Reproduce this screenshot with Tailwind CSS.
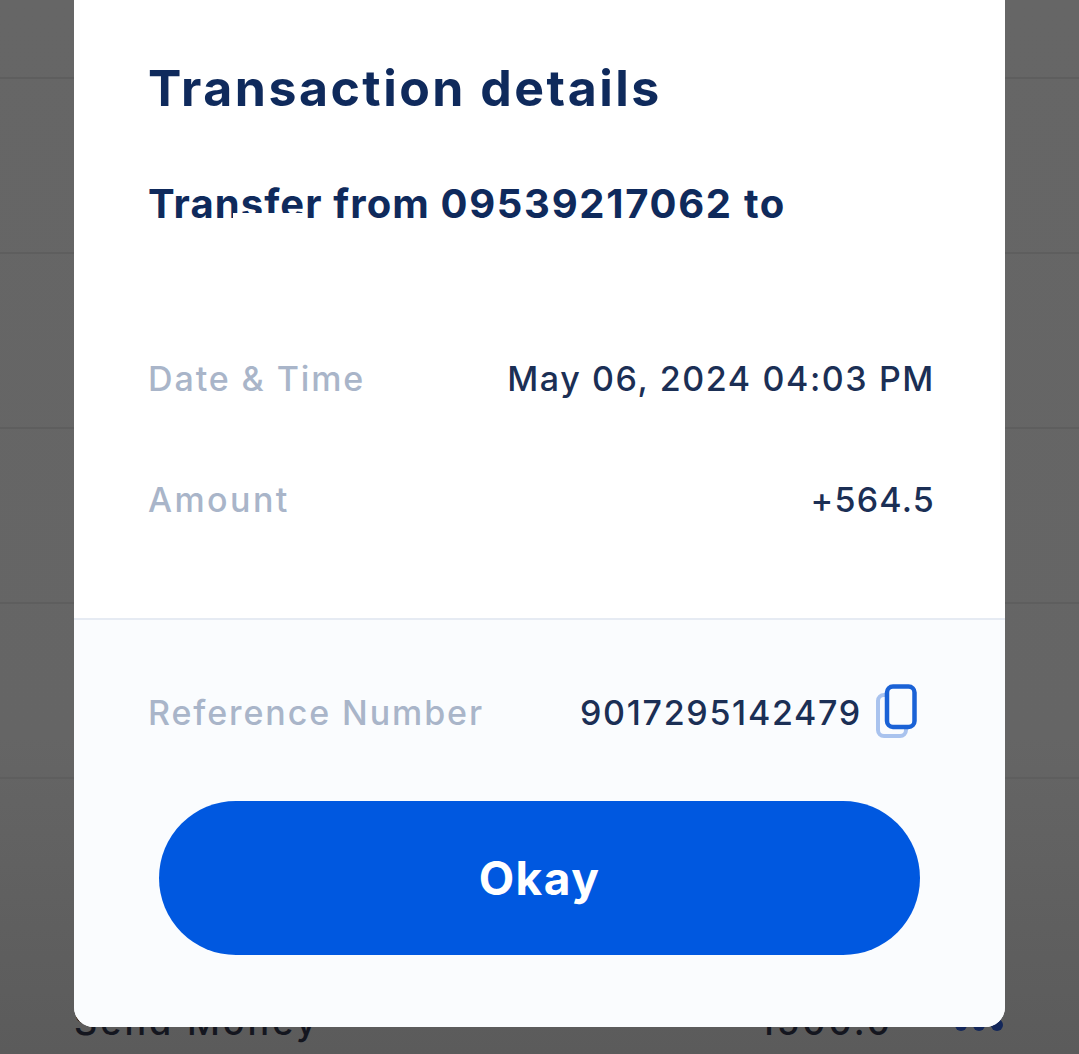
<!DOCTYPE html>
<html lang="en">
<head>
    <meta charset="UTF-8">
    <meta name="viewport" content="width=device-width, initial-scale=1.0">
    <title>Transaction details</title>
    <script src="https://cdn.jsdelivr.net/npm/@tailwindcss/browser@4"></script>
</head>
<body class="bg-[#636363]">
    <div class="relative w-[1079px] h-[1054px] overflow-hidden font-['Inter',sans-serif] bg-[linear-gradient(180deg,#666666_0%,#656565_70%,#5b5b5b_100%)]">
        <!-- list behind the dialog -->
        <div class="flex flex-col">
            <div class="h-[79px] border-b-2 border-[#5e5e5e]"></div>
            <div class="h-[175px] border-b-2 border-[#5e5e5e]"></div>
            <div class="h-[175px] border-b-2 border-[#5e5e5e]"></div>
            <div class="h-[175px] border-b-2 border-[#5e5e5e]"></div>
            <div class="h-[175px] border-b-2 border-[#5e5e5e]"></div>
            <div class="h-[175px] border-b-2 border-[#5e5e5e]"></div>
            <div class="flex items-center justify-between pl-[74px] pr-[76px] pt-[48px] text-[36px] leading-[40px] font-medium tracking-[3px] text-[#14161f]">
                <span>Send Money</span>
                <div class="flex items-center gap-[62px]">
                    <span>1500.0</span>
                    <div class="flex gap-[6px] pt-[6px]">
                        <span class="size-[12px] rounded-full bg-[#13275a]"></span>
                        <span class="size-[12px] rounded-full bg-[#13275a]"></span>
                        <span class="size-[12px] rounded-full bg-[#13275a]"></span>
                    </div>
                </div>
            </div>
        </div>

        <!-- dialog -->
        <div class="absolute left-[74px] top-0 w-[931px] h-[1027px] rounded-b-[20px] bg-white overflow-hidden flex flex-col">
            <div class="h-[620px] border-b-2 border-[#e6ebf3] pl-[74px] pr-[70px] text-[#0f2a5c]">
                <h1 class="pt-[58px] text-[50px] leading-[60px] font-bold tracking-[2.5px]">Transaction details</h1>
                <!-- second line of the title is blanked out in the source shot -->
                <div class="relative mt-[62px] h-[39px] overflow-hidden text-[40px] leading-[48px] font-bold">
                    <p class="whitespace-nowrap"><span class="tracking-[1.1px]">Transfer from </span><span class="tracking-[1.7px]">09539217062 to</span></p>
                    <div class="absolute left-[85px] top-[33px] w-[72px] h-[6px] bg-white"></div>
                </div>
                <div class="mt-[139px] flex items-center justify-between text-[34px] leading-[42px] font-medium">
                    <span class="text-[#a9b5c9] tracking-[1.9px]">Date &amp; Time</span>
                    <span class="text-[#1b2f55] tracking-[1.6px]">May 06, 2024 04:03 PM</span>
                </div>
                <div class="mt-[79px] flex items-center justify-between text-[34px] leading-[42px] font-medium">
                    <span class="text-[#a9b5c9] tracking-[2.4px]">Amount</span>
                    <span class="text-[#1b2f55] tracking-[1.2px]">+564.5</span>
                </div>
            </div>
            <div class="flex-1 bg-[#fafcfe] px-[74px]">
                <div class="pt-[66px] flex items-center justify-between text-[34px] leading-[42px] font-medium">
                    <span class="text-[#a9b5c9] tracking-[1.9px]">Reference Number</span>
                    <div class="flex items-center gap-[13px] mr-[14px]">
                        <span class="text-[#1b2f55] tracking-[1.7px]">9017295142479</span>
                        <svg class="w-[42px] h-[54px] -translate-y-[2px]" viewBox="0 0 42 54" fill="none">
                            <rect x="3" y="11" width="28" height="41" rx="6" stroke="#a9c3ee" stroke-width="4"/>
                            <rect x="12" y="2.5" width="27.5" height="40.5" rx="6" fill="#fafcfe" stroke="#1a62d6" stroke-width="4.5"/>
                        </svg>
                    </div>
                </div>
                <button class="mt-[61px] ml-[11px] w-[761px] h-[154px] rounded-full bg-[#0058e0] text-white text-[46px] font-bold tracking-[1.5px] flex items-center justify-center">Okay</button>
            </div>
        </div>
    </div>
</body>
</html>
